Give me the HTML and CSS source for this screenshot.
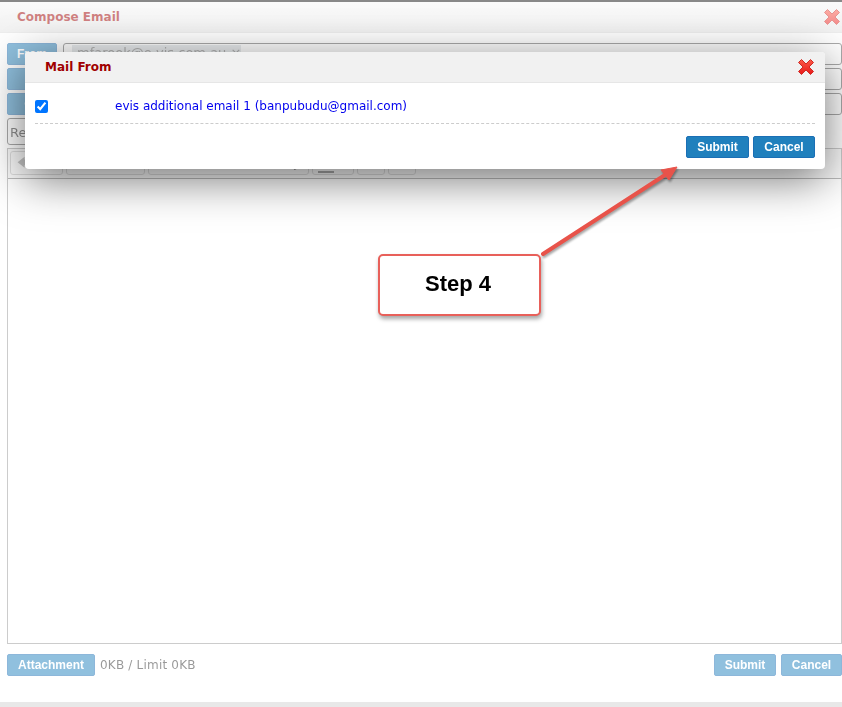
FILE: index.html
```html
<!DOCTYPE html>
<html lang="en">
<head>
  <meta charset="UTF-8" />
  <title>Compose Email</title>
  <link rel="stylesheet" href="styles.css">
</head>
<body>
  <svg class="icon-defs" width="0" height="0">
    <defs>
      <linearGradient id="xfill" x1="0" y1="0" x2="0" y2="1">
        <stop offset="0" stop-color="#fb5a48" />
        <stop offset="1" stop-color="#e81818" />
      </linearGradient>
      <symbol id="icon-x" viewBox="0 0 18 18">
        <path d="M1.5 4.5 4.5 1.5 9 6 13.5 1.5 16.5 4.5 12 9 16.5 13.5 13.5 16.5 9 12 4.5 16.5 1.5 13.5 6 9z" fill="url(#xfill)" stroke="#cf2a24" stroke-width="1" stroke-linejoin="round" />
      </symbol>
    </defs>
  </svg>

  <div class="compose">
    <div class="compose-head">
      <span class="compose-title">Compose Email</span>
      <svg class="close-x"><use href="#icon-x" /></svg>
    </div>

    <div class="compose-body">
      <div class="field-row">
        <button class="btn btn-label">From</button>
        <div class="field"><span class="chip">mfarook@e-vis.com.au &times;</span></div>
      </div>
      <div class="field-row">
        <button class="btn btn-label">To</button>
        <div class="field"></div>
      </div>
      <div class="field-row">
        <button class="btn btn-label">Cc</button>
        <div class="field"></div>
      </div>
      <div class="subject">Re</div>

      <div class="editor">
        <div class="toolbar">
          <span class="tool tool-back">&#129092;</span>
          <span class="tool tool-format"></span>
          <span class="tool tool-font">Font Family</span>
          <span class="tool tool-line"><i></i></span>
          <span class="tool tool-small"></span>
          <span class="tool tool-small"></span>
        </div>
        <div class="editor-area"></div>
      </div>

      <div class="compose-foot">
        <button class="btn btn-attach">Attachment</button>
        <span class="limit">0KB / Limit 0KB</span>
        <button class="btn btn-submit">Submit</button>
        <button class="btn btn-cancel">Cancel</button>
      </div>
    </div>
  </div>
  <div class="page-bottom"></div>

  <div class="modal">
    <div class="modal-head">
      <span class="modal-title">Mail From</span>
      <svg class="modal-x"><use href="#icon-x" /></svg>
    </div>
    <div class="modal-row">
      <input type="checkbox" checked>
      <span class="mail-option">evis additional email 1 (banpubudu@gmail.com)</span>
    </div>
    <div class="modal-foot">
      <button class="btn btn-modal">Submit</button>
      <button class="btn btn-modal">Cancel</button>
    </div>
  </div>

  <svg class="arrow" width="150" height="100" viewBox="0 0 150 100">
    <line x1="5" y1="91" x2="127" y2="12" stroke="#e8534a" stroke-width="4" stroke-linecap="round" />
    <polygon points="139,4 123,7 131,17" fill="#e8534a" stroke="#e8534a" stroke-linejoin="round" />
  </svg>
  <div class="callout">Step 4</div>
</body>
</html>
```

FILE: styles.css
```css
* {
  box-sizing: border-box;
  margin: 0;
  padding: 0;
}
body {
  font-family: "DejaVu Sans", sans-serif;
  background-color: #fff;
  width: 842px;
  height: 707px;
  overflow: hidden;
  position: relative;
}

.icon-defs {
  position: absolute;
}

.btn {
  font-family: "Liberation Sans", Arial, sans-serif;
  font-size: 12px;
  font-weight: bold;
  color: #fff;
  background-color: #2080bd;
  border: 1px solid #1b6fb5;
  border-radius: 2px;
  height: 22px;
}

/* everything behind the popup is faded */
.compose {
  opacity: 0.5;
  height: 702px;
  border-top: 2px solid #111;
  display: flex;
  flex-direction: column;
}

.compose-head {
  height: 31px;
  flex: none;
  padding: 0 1px 0 17px;
  display: flex;
  justify-content: space-between;
  align-items: center;
  background: linear-gradient(#f5f5f5, #e4e4e4);
  border-bottom: 1px solid #ddd;
}

.compose-title {
  font-size: 12px;
  font-weight: bold;
  color: #a00000;
}

.close-x {
  width: 18px;
  height: 18px;
}

.compose-body {
  flex: 1;
  padding: 10px 0 0 7px;
  display: flex;
  flex-direction: column;
}

.field-row {
  display: flex;
  gap: 6px;
  height: 22px;
  margin-bottom: 3px;
}

.btn-label {
  width: 50px;
  flex: none;
}

.field {
  flex: 1;
  border: 1px solid #555;
  border-radius: 3px;
  padding: 1px 8px;
  overflow: hidden;
}

.chip {
  display: block;
  background-color: #d4dade;
  color: #666;
  font-size: 13px;
  line-height: 15px;
  padding: 0 5px;
  width: 169px;
  white-space: nowrap;
  overflow: hidden;
}

.subject {
  width: 320px;
  height: 27px;
  margin-bottom: 3px;
  border: 1px solid #555;
  border-radius: 3px;
  font-size: 13px;
  line-height: 28px;
  padding-left: 2px;
  color: #222;
}

.editor {
  flex: 1;
  display: flex;
  flex-direction: column;
  border: 1px solid #999;
}

.toolbar {
  height: 30px;
  flex: none;
  display: flex;
  gap: 3px;
  padding: 2px;
  background-color: #f4f4f4;
  border-bottom: 1px solid #777;
}

.tool {
  height: 24px;
  border: 1px solid #bbb;
  border-radius: 3px;
  font-size: 12px;
  line-height: 22px;
  color: #444;
}

.tool-back {
  width: 53px;
  padding-left: 6px;
  color: #888;
}

.tool-format {
  width: 79px;
}

.tool-font {
  width: 161px;
  text-align: right;
  padding-right: 8px;
}

.tool-line {
  width: 42px;
  padding: 19px 19px 0 5px;
}

.tool-line i {
  display: block;
  height: 2px;
  background-color: #555;
}

.tool-small {
  width: 28px;
}

.editor-area {
  flex: 1;
  background-color: #fff;
}

.compose-foot {
  height: 58px;
  flex: none;
  padding-top: 10px;
  display: flex;
  align-items: flex-start;
  gap: 5px;
}

.btn-attach {
  width: 88px;
}

.limit {
  flex: 1;
  font-size: 12px;
  line-height: 22px;
  letter-spacing: 0.2px;
  color: #333;
}

.btn-submit {
  width: 62px;
}

.btn-cancel {
  width: 61px;
}

.page-bottom {
  height: 5px;
  background-color: #e8e8e8;
}

.modal {
  position: absolute;
  top: 52px;
  left: 25px;
  width: 800px;
  height: 117px;
  background-color: #fff;
  border-radius: 4px;
  box-shadow: 0 10px 45px rgba(0, 0, 0, 0.55);
}

.modal-head {
  height: 31px;
  padding: 0 10px 0 20px;
  display: flex;
  justify-content: space-between;
  align-items: center;
  background-color: #f1f1f1;
  border-bottom: 1px solid #e6e6e6;
  border-radius: 4px 4px 0 0;
}

.modal-title {
  font-size: 12px;
  font-weight: bold;
  color: #a00000;
}

.modal-x {
  width: 18px;
  height: 18px;
}

.modal-row {
  margin: 0 10px;
  height: 41px;
  padding-top: 6px;
  display: flex;
  align-items: center;
  border-bottom: 1px dashed #ccc;
}

.modal-row input {
  width: 13px;
  height: 13px;
  flex: none;
}

.mail-option {
  margin-left: 67px;
  font-size: 12px;
  color: #0000ee;
}

.modal-foot {
  display: flex;
  justify-content: flex-end;
  gap: 4px;
  padding: 12px 10px 0 0;
}

.btn-modal {
  width: 63px;
}

.btn-modal:last-child {
  width: 62px;
}

.arrow {
  position: absolute;
  left: 538px;
  top: 163px;
  overflow: visible;
  filter: drop-shadow(1px 2px 1px rgba(0, 0, 0, 0.35));
}

.callout {
  position: absolute;
  left: 378px;
  top: 254px;
  width: 163px;
  height: 62px;
  padding-right: 3px;
  background-color: #fff;
  border: 2px solid #e8605a;
  border-radius: 5px;
  box-shadow: 1px 3px 4px rgba(0, 0, 0, 0.35);
  font-family: "Liberation Sans", Arial, sans-serif;
  font-size: 22px;
  font-weight: bold;
  line-height: 56px;
  text-align: center;
  color: #000;
}
```
